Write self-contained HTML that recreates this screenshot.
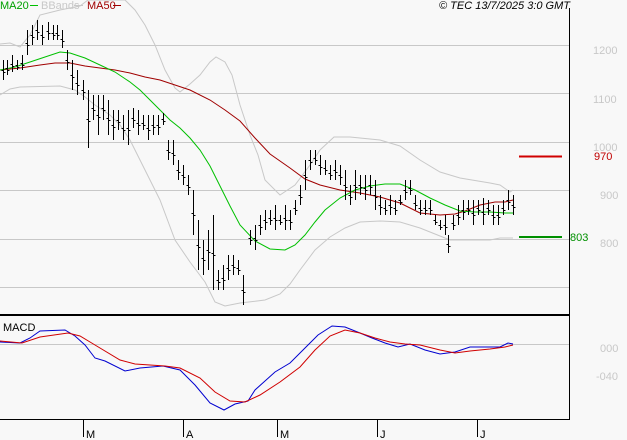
<!DOCTYPE html>
<html><head><meta charset="utf-8"><style>
body{margin:0;background:#f8f8f8;}
svg{display:block;font-family:"Liberation Sans",sans-serif;}
</style></head><body>
<svg width="627" height="440" viewBox="0 0 627 440">
<rect width="627" height="440" fill="#f8f8f8"/>
<g stroke="#c8c8c8" stroke-width="1">
<line x1="0" y1="45.5" x2="569" y2="45.5"/>
<line x1="0" y1="93.5" x2="569" y2="93.5"/>
<line x1="0" y1="142.5" x2="569" y2="142.5"/>
<line x1="0" y1="190.5" x2="569" y2="190.5"/>
<line x1="0" y1="239.5" x2="569" y2="239.5"/>
<line x1="0" y1="287.5" x2="569" y2="287.5"/>
<line x1="0" y1="344.5" x2="569" y2="344.5"/>
</g>
<g stroke="#c8c8c8" fill="none" stroke-width="1">
<polyline points="0,44 10,43 20,47 30,35 40,15 60,10 80,6 88,0 125,0 135,10 145,25 155,45 165,70 175,88 180,92 190,84 200,75 210,62 216,57 225,62 232,75 240,105 250,135 258,155 265,180 280,195 295,185 310,165 320,150 334,137 350,137 380,140 400,146 420,160 440,172 460,178 490,183 500,185 510,192 513,190"/>
<polyline points="0,95 10,89 20,87 60,86 75,90 85,97 95,105 110,115 120,125 130,140 145,170 160,200 175,240 190,262 205,282 215,302 225,306 240,303 265,300 280,294 290,284 300,270 315,250 330,237 345,228 360,222 380,221 400,222 420,228 440,236 450,240 475,240 490,240 500,238 513,238"/>
</g>
<polyline fill="none" stroke="#a00000" stroke-width="1" points="0,70 20,68 40,65 55,63 70,63 85,66 100,68 115,70 130,73 145,77 160,80 175,85 190,90 210,100 225,110 240,121 255,138 270,154 290,168 305,179 320,185 340,190 360,193 380,197 400,203 410,208 420,213 440,215 455,214 465,211 480,205 495,202 505,202 513,200"/>
<polyline fill="none" stroke="#00c000" stroke-width="1" points="0,70 15,67 30,62 45,57 60,52 70,53 85,58 100,65 115,72 130,82 140,90 150,100 160,110 170,120 180,128 190,138 200,150 210,166 220,186 230,206 240,225 255,241 270,249 285,250 295,245 305,235 315,222 325,210 340,198 355,190 370,186 385,184 400,184 415,190 430,198 445,205 460,211 475,212 490,212 505,213 513,213"/>
<path id="bars" stroke="#000" stroke-width="1" fill="none" d=""/>
<line x1="519" y1="156.5" x2="562" y2="156.5" stroke="#d00000" stroke-width="2"/>
<line x1="519" y1="237" x2="562" y2="237" stroke="#009000" stroke-width="2"/>
<text x="594" y="160" font-size="11" fill="#c00000">970</text>
<text x="570" y="241" font-size="11" fill="#009000">803</text>
<g font-size="11" fill="#c8c8c8">
<text x="593" y="54">1200</text>
<text x="593" y="103">1100</text>
<text x="593" y="151">1000</text>
<text x="600" y="199">900</text>
<text x="600" y="247">800</text>
<text x="600" y="352">000</text>
<text x="596" y="380">-040</text>
</g>
<polyline fill="none" stroke="#0000d0" stroke-width="1" points="0,342 20,343 30,338 40,331 65,330 75,336 85,345 95,358 105,361 125,371 140,368 163,366 180,370 195,385 210,403 224,410 235,404 248,401 255,390 275,372 290,363 305,348 318,335 332,326 345,327 360,333 372,338 385,343 398,347 410,344 425,350 440,354 455,352 470,347 485,347 500,347 508,343 513,344"/>
<polyline fill="none" stroke="#d00000" stroke-width="1" points="0,341 22,343 40,337 68,333 80,336 95,345 120,360 135,364 165,366 180,368 200,378 215,392 230,401 245,402 260,395 280,382 300,367 315,350 330,336 345,330 360,333 375,338 390,342 405,344 420,345 440,350 455,353 470,351 490,349 505,347 513,345"/>
<line x1="0" y1="315" x2="569" y2="315" stroke="#000" stroke-width="2"/>
<line x1="569.5" y1="8" x2="569.5" y2="420" stroke="#000" stroke-width="1"/>
<line x1="0" y1="419.5" x2="569" y2="419.5" stroke="#000" stroke-width="1"/>
<g stroke="#000"><line x1="83.5" y1="420" x2="83.5" y2="437"/><line x1="183.5" y1="420" x2="183.5" y2="437"/><line x1="277.5" y1="420" x2="277.5" y2="437"/><line x1="377.5" y1="420" x2="377.5" y2="437"/><line x1="477.5" y1="420" x2="477.5" y2="437"/></g>
<g font-size="11" fill="#000">
<text x="86" y="438">M</text><text x="186" y="438">A</text><text x="280" y="438">M</text><text x="380" y="438">J</text><text x="480" y="438">J</text>
<text x="3" y="331">MACD</text>
<text x="570" y="9" text-anchor="end" font-style="italic" font-size="11">© TEC 13/7/2025 3:0 GMT</text>
</g>
<g font-size="11">
<text x="0" y="9" fill="#00a000">MA20</text><line x1="30" y1="5.5" x2="38" y2="5.5" stroke="#00c000"/>
<text x="41" y="9" fill="#c8c8c8">BBands</text><line x1="74" y1="5.5" x2="83" y2="5.5" stroke="#c8c8c8"/>
<text x="87" y="9" fill="#a00000">MA50</text><line x1="113" y1="5.5" x2="121" y2="5.5" stroke="#a00000"/>
</g>
<script>
var b=[[3,60,80],[7,60,75],[12,55,72],[17,60,70],[22,55,70],[27,30,55],[32,25,45],[37,20,40],[42,25,45],[48,22,40],[53,25,40],[57,25,40],[62,30,48],[67,50,70],[72,60,90],[77,70,95],[83,80,100],[88,90,148],[93,95,120],[98,95,135],[103,95,120],[108,100,135],[113,110,140],[118,110,130],[123,115,140],[128,110,145],[133,108,128],[138,110,135],[143,115,130],[148,115,140],[153,115,135],[158,115,135],[163,113,125],[168,140,160],[173,140,165],[178,160,180],[183,165,185],[188,175,195],[193,190,235],[198,220,270],[203,240,275],[208,230,270],[213,215,290],[218,270,290],[223,265,290],[228,255,280],[233,255,275],[238,260,275],[243,275,305],[250,230,245],[255,225,250],[260,215,235],[265,210,230],[270,210,225],[275,205,230],[280,215,225],[285,205,230],[290,210,230],[295,200,215],[300,185,205],[305,160,190],[310,150,170],[315,150,165],[320,155,175],[325,160,175],[330,165,180],[335,160,180],[340,165,185],[345,170,200],[350,185,205],[355,170,200],[360,175,195],[365,175,200],[370,175,195],[375,180,210],[380,195,215],[385,200,215],[390,195,215],[395,200,215],[400,195,205],[405,180,200],[410,180,195],[415,195,210],[420,200,215],[425,200,215],[430,200,215],[435,215,225],[440,220,230],[445,215,235],[448,235,253],[453,215,230],[458,205,225],[463,200,220],[468,200,215],[473,200,225],[478,200,215],[483,198,225],[488,200,215],[493,205,225],[498,205,225],[503,200,215],[508,190,210],[513,195,215]];
var d="";b.forEach(function(a){var x=a[0]+0.5,m=Math.round((a[1]+a[2])/2)+0.5;d+="M"+x+" "+a[1]+"V"+a[2]+"M"+(x-2)+" "+m+"H"+x+"M"+x+" "+(m+2)+"H"+(x+2);});
document.getElementById("bars").setAttribute("d",d);
</script>
</svg>
</body></html>
